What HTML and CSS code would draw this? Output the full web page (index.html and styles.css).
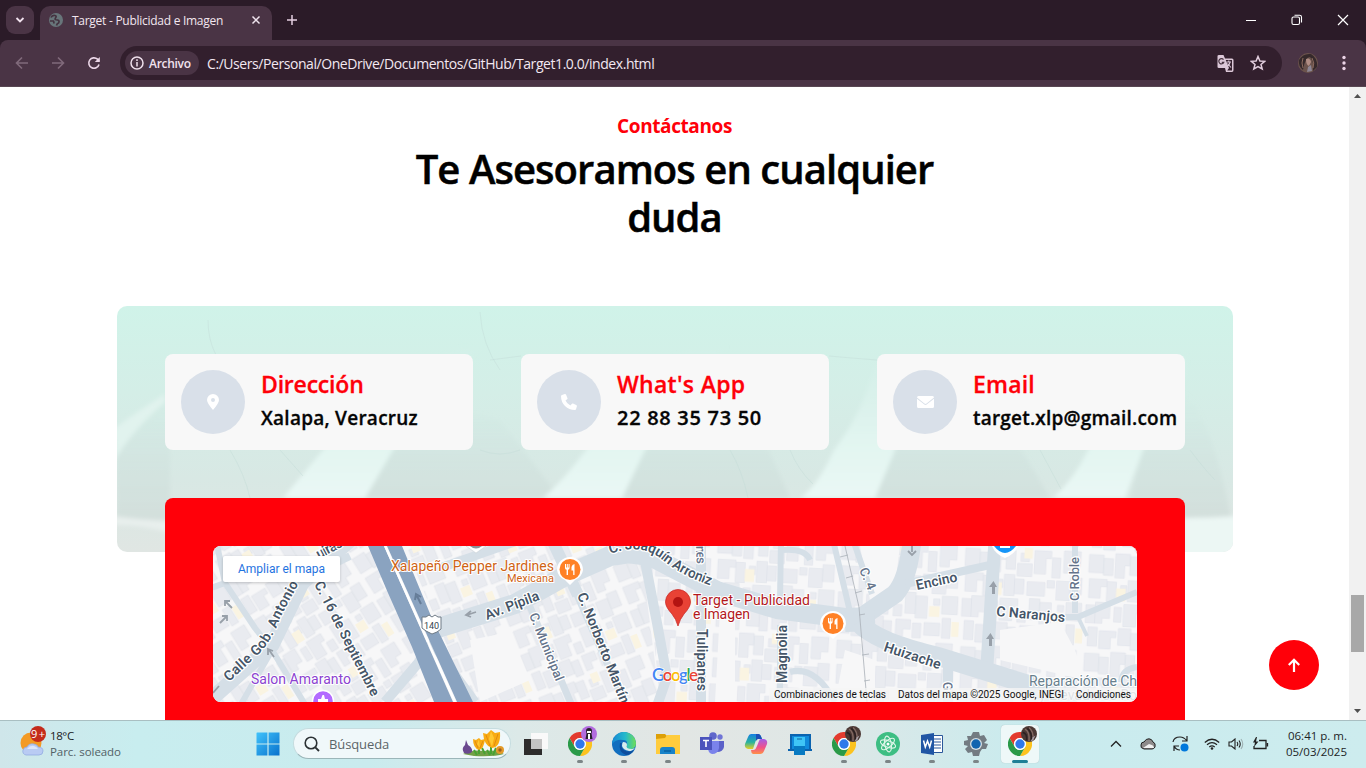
FILE: index.html
```html
<!DOCTYPE html>
<html lang="es">
<head>
<meta charset="utf-8">
<title>Target - Publicidad e Imagen</title>
<link rel="stylesheet" href="styles.css">
</head>
<body>
<svg class="defs" width="0" height="0">
  <defs>
    <symbol id="chrome" viewBox="0 0 24 24">
      <path fill="#e33b2e" d="M1.6 6A12 12 0 0 1 22.4 6H12A6 6 0 0 0 6.8 15Z"/>
      <path fill="#fcc31e" d="M22.4 6A12 12 0 0 1 12 24L17.2 15A6 6 0 0 0 12 6Z"/>
      <path fill="#2a9a48" d="M12 24A12 12 0 0 1 1.6 6L6.8 15A6 6 0 0 0 17.2 15Z"/>
      <circle cx="12" cy="12" r="6" fill="#fff"/><circle cx="12" cy="12" r="4.7" fill="#2f78ea"/>
    </symbol>
    <symbol id="portrait" viewBox="0 0 20 20">
      <circle cx="10" cy="10" r="10" fill="#6b534c"/>
      <path fill="#35292b" d="M1 7Q5 0 13 1Q20 5 19 14L15 18Q16 8 12 4Q7 4 5 17Q0 13 1 7Z"/>
      <path fill="#b08d84" d="M8 6Q12 4 13 9L11 13Q8 12 8 6Z"/>
      <path fill="#8d8795" d="M10 14L13 12L14 18L9 19Z"/>
      <path fill="none" stroke="#8c6b5e" d="M5 5Q3 10 5 15M14 5Q17 10 15 15"/>
    </symbol>
    <symbol id="hair" viewBox="0 0 20 20">
      <circle cx="10" cy="10" r="10" fill="#4b3834"/>
      <path fill="none" stroke="#806761" stroke-width="1.800" d="M5 4Q11 7 10 19M10 2Q16 7 15 17"/>
      <path fill="none" stroke="#2b2021" stroke-width="2" d="M2 8Q8 9 7 18M8 3Q14 8 13 18"/>
      <path fill="#a9a2a9" d="M15 14L18 12L15 18L12 19Z"/>
    </symbol>
    <symbol id="food" viewBox="0 0 26 28">
      <path fill="#fff" d="M13 0A13 13 0 0 1 26 13Q25 20 18 23L13 28L8 23Q1 20 0 13A13 13 0 0 1 13 0Z"/>
      <circle cx="13" cy="12.500" r="10.500" fill="#ff8126"/>
      <path fill="#fff" d="M8 7H9V10.500H9.800V7H10.800V10.500H11.600V7H12.600V11Q12.600 12.500 11 12.800V18H9.600V12.800Q8 12.500 8 11ZM17.500 7V18H16.200V13.500H14.500V10Q15 7.500 17.500 7Z"/>
    </symbol>
  </defs>
</svg>

<header class="tabstrip">
  <button class="tab-search"><svg width="12" height="12" viewBox="0 0 12 12"><path d="M2.500 4L6 7.500L9.500 4" fill="none" stroke="#f1e2ee" stroke-width="1.800"/></svg></button>
  <div class="tab">
    <svg width="14" height="14" viewBox="0 0 14 14"><circle cx="7" cy="7" r="7" fill="#68757a"/><path d="M2 4.500Q3 2 6 2.500Q8 3 6.500 5Q5 7 8.500 7Q11 7.500 9.500 10Q8 10.500 7.500 12.500M1 8H4.500Q5.500 9 4.500 10.500" fill="none" stroke="#443240" stroke-width="1.700"/></svg>
    <span class="tab-title">Target - Publicidad e Imagen</span>
    <svg width="10" height="10" viewBox="0 0 10 10"><path d="M1.500 1.500L8.500 8.500M8.500 1.500L1.500 8.500" stroke="#f0e4ee" stroke-width="1.500"/></svg>
  </div>
  <svg class="new-tab" width="12" height="12" viewBox="0 0 12 12"><path d="M6 1V11M1 6H11" stroke="#e5cfe1" stroke-width="1.500"/></svg>
  <div class="window-buttons">
    <svg width="12" height="12" viewBox="0 0 12 12"><path d="M1 6.500H11" stroke="#fff"/></svg>
    <svg width="12" height="12" viewBox="0 0 12 12"><g fill="none" stroke="#fff" stroke-width="1.100"><rect x="1" y="3" width="7.500" height="7.500" rx="1.500"/><path d="M3.500 1.200H8.500Q10.500 1.200 10.500 3V8.500"/></g></svg>
    <svg width="12" height="12" viewBox="0 0 12 12"><path d="M1 1L11 11M11 1L1 11" stroke="#fff" stroke-width="1.200"/></svg>
  </div>
</header>

<nav class="toolbar">
  <div class="nav-icons">
    <svg width="14" height="14" viewBox="0 0 14 14"><path d="M13 7H1.500M7 1.500L1.500 7L7 12.500" fill="none" stroke="#806a7b" stroke-width="1.600"/></svg>
    <svg width="14" height="14" viewBox="0 0 14 14"><path d="M1 7H12.500M7 1.500L12.500 7L7 12.500" fill="none" stroke="#806a7b" stroke-width="1.600"/></svg>
    <svg width="14" height="14" viewBox="0 0 14 14"><path d="M12 8.500A5.200 5.200 0 1 1 10.500 3.200L12 5" fill="none" stroke="#ecd7e8" stroke-width="1.600"/><path d="M12.800 1V6H7.800Z" fill="#ecd7e8"/></svg>
  </div>
  <div class="omnibox">
    <div class="chip">
      <svg width="14" height="14" viewBox="0 0 14 14"><circle cx="7" cy="7" r="6" fill="none" stroke="#efe0ec" stroke-width="1.500"/><path d="M7 6V10.500M7 3.300V5" stroke="#efe0ec" stroke-width="1.500"/></svg>
      <span>Archivo</span>
    </div>
    <span class="url">C:/Users/Personal/OneDrive/Documentos/GitHub/Target1.0.0/index.html</span>
    <svg class="translate" width="17" height="17" viewBox="0 0 17 17"><path d="M2 0H6.500L8 3.500H15Q16.500 3.500 16.500 5V15Q16.500 17 15 17H9L8 13H2Q.5 13 .5 12V1Q.5 0 2 0Z" fill="#dcc8d8"/><path d="M8.700 5H15V15.500H10.200L12 13Z" fill="#35212f"/><path d="M6.500 4.700A2.600 2.600 0 1 0 6.800 7.300H4.800" fill="none" stroke="#46323f" stroke-width="1.200"/><path d="M9.500 7H14M11.800 5.500V7M13 7.500Q12 10.500 10 11.500M10.500 8.500L14 12.500" fill="none" stroke="#dcc8d8" stroke-width="1.100"/></svg>
    <svg width="16" height="16" viewBox="0 0 16 16"><path d="M8 1.500L9.900 6L14.700 6.300L11 9.400L12.200 14L8 11.500L3.800 14L5 9.400L1.300 6.300L6.100 6Z" fill="none" stroke="#e2cede" stroke-width="1.500"/></svg>
  </div>
  <svg class="avatar" width="20" height="20"><use href="#portrait"/></svg>
  <svg class="kebab" width="4" height="16" viewBox="0 0 4 16"><g fill="#ecd4e7"><circle cx="2" cy="2.500" r="1.700"/><circle cx="2" cy="8" r="1.700"/><circle cx="2" cy="13.500" r="1.700"/></g></svg>
</nav>

<div class="viewport">
  <main class="page">
    <div class="heading">
      <h4>Contáctanos</h4>
      <h1>Te Asesoramos en cualquier duda</h1>
    </div>
    <section class="contact">
      <svg class="backdrop" width="1116" height="246" viewBox="117 306 1116 246">
        <defs>
          <linearGradient id="mint" x2="0" y2="1"><stop stop-color="#d0f3e9"/><stop offset=".35" stop-color="#d4eee7"/><stop offset=".7" stop-color="#d8e8e4"/><stop offset="1" stop-color="#e0e6e3"/></linearGradient>
          <linearGradient id="rib" gradientUnits="userSpaceOnUse" x1="0" y1="345" x2="0" y2="498"><stop stop-color="#daf3ed" stop-opacity="0"/><stop offset=".6" stop-color="#e1f5f0"/><stop offset="1" stop-color="#eaf8f5"/></linearGradient>
          <linearGradient id="shade" gradientUnits="userSpaceOnUse" x1="0" y1="390" x2="0" y2="510"><stop stop-color="#c6dfda" stop-opacity="0"/><stop offset="1" stop-color="#cbd9d6" stop-opacity=".5"/></linearGradient>
          <filter id="soft"><feGaussianBlur stdDeviation="2.200"/></filter>
        </defs>
        <rect x="117" y="306" width="1116" height="246" fill="url(#mint)"/>
        <g filter="url(#soft)">
          <path fill="url(#shade)" d="M117 456Q130 432 170 398V530Q140 521 117 517ZM393 450Q440 400 500 420L560 498H365ZM645 450Q690 400 760 430L790 498H622ZM895 450Q940 400 1010 430L1050 498H875ZM1143 450L1185 390Q1215 430 1231 518H1125Z"/>
          <path fill="url(#rib)" d="M393 450Q425 400 478 350L465 345Q370 390 323 450L283 498H365ZM645 450Q672 400 735 340L690 345Q620 400 586 450Q564 480 543 498H622ZM895 450Q880 400 876 360Q865 410 834 450Q820 482 801 498H875ZM1143 450Q1170 400 1186 375V354Q1120 400 1088 450Q1075 478 1053 498H1125Z"/>
          <path fill="#e1f3ee" d="M112 430Q118 450 112 465Q130 432 165 402V394Q140 410 112 430Z"/>
          <path fill="#e8efed" d="M112 516Q140 520 170 521V533Q140 524 112 525Z"/>
          <path fill="#ecf7f4" d="M1183 518Q1210 518 1238 516V556H1183Z"/>
        </g>
        <path fill="none" stroke="#c4dcd6" stroke-opacity=".45" d="M208 320Q208 340 216 355M480 312Q482 345 500 370M490 360L521 356M829 356Q850 358 877 360M230 450Q245 475 250 498M280 450L303 476M480 450Q500 458 520 450M730 450Q742 470 748 498M790 450Q798 470 813 484M1040 450L1061 489M1190 450Q1205 470 1215 480"/>
      </svg>
      <div class="cards">
        <article class="card">
          <div class="badge"><svg width="12" height="16" viewBox="0 0 12 16"><path fill="#fff" fill-rule="evenodd" d="M6 0A6 6 0 0 1 12 6Q12 9 6 16Q0 9 0 6A6 6 0 0 1 6 0ZM6 4A2 2 0 1 0 6 8A2 2 0 1 0 6 4Z"/></svg></div>
          <div><h3 class="k1">Dirección</h3><p class="v1">Xalapa, Veracruz</p></div>
        </article>
        <article class="card">
          <div class="badge"><svg width="16" height="16" viewBox="0 0 16 16"><path fill="#fff" d="M5.100.8Q4.700-.1 3.800.1L1 .9Q0 1.200 0 2Q0 8 4 12Q8 16 14 16Q14.800 16 15.100 15L15.900 12.200Q16.100 11.300 15.200 10.900L12 9.600Q11.200 9.200 10.700 9.900L9.400 11.500Q6 10 4.500 6.600L6.100 5.300Q6.800 4.800 6.400 4Z"/></svg></div>
          <div><h3 class="k2">What's App</h3><p class="v2">22 88 35 73 50</p></div>
        </article>
        <article class="card">
          <div class="badge"><svg width="17" height="12" viewBox="0 0 17 12"><path fill="#fff" d="M1.500 0H15.500Q17 0 17 1.500L9.500 7.500Q8.500 8.300 7.500 7.500L0 1.500Q0 0 1.500 0ZM0 2.800L7 8.300Q8.500 9.500 10 8.300L17 2.800V10.500Q17 12 15.500 12H1.500Q0 12 0 10.500Z"/></svg></div>
          <div><h3 class="k3">Email</h3><p class="v3">target.xlp@gmail.com</p></div>
        </article>
      </div>
      <div class="map-frame">
        <svg class="map" width="924" height="156" viewBox="213 546 924 156">
          <defs>
            <pattern id="lots" width="118" height="94" patternUnits="userSpaceOnUse">
              <g fill="#e9ebf0" stroke="#dfe2ea" stroke-width=".6"><path d="M2 3H16V20H2ZM16 6H25V22H16ZM27 1H41V12H36V24H27ZM41 3H50V21H41ZM55 5H63V13H55ZM52 15H66V27H52ZM68 2H84V9H79V24H68ZM85 8H93V27H85ZM96 1H112V15H105V22H96ZM3 26H20V33H14V44H3ZM20 28H29V47H20ZM33 31H39V39H33ZM40 26H50V46H40ZM50 30H59V44H50ZM62 32H79V45H62ZM81 30H88V37H81ZM90 30H103V48H90ZM103 26H114V42H103ZM1 51H10V68H1ZM10 48H24V63H17V68H10ZM28 52H35V66H28ZM37 49H54V57H49V70H37ZM54 60H62V71H54ZM65 48H75V68H65ZM75 51H86V72H75ZM92 53H98V59H92ZM100 50H115V67H100ZM4 72H13V90H4ZM15 75H31V81H26V92H15ZM33 72H45V88H33ZM45 76H53V92H45ZM57 74H71V83H64V90H57ZM73 77H81V91H73ZM84 76H99V88H84ZM101 71H109V90H101Z"/></g>
              <path fill="#faf4e2" d="M58 0H66V10H58ZM29 34H38V46H29ZM88 60H98V70H88ZM110 74H117V88H110Z"/>
            </pattern>
            <pattern id="lotsLeft" href="#lots" patternTransform="rotate(-32)"/>
            <pattern id="lotsMid" href="#lots" patternTransform="rotate(-22)"/>
            <pattern id="lotsRight" href="#lots" patternTransform="rotate(3) scale(1.050)"/>
          </defs>
          <rect x="213" y="546" width="924" height="156" fill="#f7f7f8"/>
          <path fill="url(#lotsLeft)" d="M213 546H375L435 702H213Z"/>
          <path fill="url(#lotsMid)" d="M405 546H640L660 702H470Z"/>
          <path fill="url(#lotsRight)" d="M645 546H1137V702H660Z"/>
          <path fill="#f7f7f8" d="M470 640L510 632L530 680L480 702ZM860 546H900L895 585L870 600ZM1000 630L1060 622L1075 650L1085 680L1000 660ZM720 610H735V702H715ZM845 650L875 660V702H835Z"/>
          <g fill="none" stroke="#d5dfe7" stroke-linejoin="round">
            <path stroke-width="15" d="M208 702L272 645L302 583L350 540"/>
            <path stroke-width="6" d="M216 540L225 583L255 628L272 650L306 706M225 583L205 590M272 650L240 706"/>
            <path stroke-width="10" d="M385 702L425 655"/><path stroke-width="8" d="M300 580L350 556"/>
            <path stroke-width="20" d="M438 628L515 604L567 575L610 556L650 550"/>
            <path stroke-width="9" d="M430 640L475 702M440 568L520 540"/>
            <path stroke-width="12" d="M553 542L578 595"/><path stroke-width="7" d="M575 590L626 706M525 595L572 706"/>
            <path stroke-width="20" d="M620 552L650 556L717 591L777 609L860 620"/>
            <path stroke-width="10" d="M644 556L657 623L667 677L657 706"/>
            <path stroke-width="10" d="M701 540V706"/><path stroke-width="6" d="M781 540L780 600M780 625V706M782 550Q805 548 810 560M790 672Q815 665 835 702"/>
            <path stroke-width="19" d="M860 618L895 594Q908 580 912 540"/>
            <path stroke-width="24" d="M845 620L875 619"/>
            <path stroke-width="8" d="M905 584L990 565"/>
            <path stroke-width="13" d="M995 540L987 665"/>
            <path stroke-width="19" d="M858 622Q875 642 940 657L1027 684L1075 706"/>
            <path stroke-width="6" d="M833 540L851 616M853 540L872 594M1075 540V613M1065 617H1078L1137 592M1121 682Q1122 669 1137 667"/>
            <path stroke-width="4" d="M1077 615L1087 636"/><path stroke-width="10" d="M948 660V706"/>
          </g>
          <path d="M845 546L859 607L867 702M840 557L848 555M846 578L853 576M855 593L862 591M859 615L865 614M862 655L869 654M864 681L870 680" fill="none" stroke="#aab0b7" stroke-width=".8"/>
          <path fill="#8aa3c0" d="M368 546H384L453 702H434L412 647L388 593L368 546ZM387 546H402L431 616L473 702H457Z"/>
          <path stroke="#fff" stroke-width="2" d="M385 546L455 702"/>
          <path fill="none" stroke="#98a0a9" stroke-width="1.800" d="M232 608L226 602M225 606V601H230M220 623L227 616M222 616H227V621M274 657L269 650M268 655V649L273 651M213 693L219 686M476 612L467 615M471 611L466 615L471 617M912 546V552M908 551L912 555L916 551"/>
          <path fill="none" stroke="#667d98" stroke-width="2" d="M421 604L417 596M415 600L416 594L421 597"/>
          <path fill="#98a0a9" d="M992 594V587H989L993.500 581L997 587H995V594ZM989 646V639H986L990.500 633L994 639H992V646Z"/>
          <g class="street">
            <path id="gob" class="guide" d="M229 682L262 651Q275 634 280 618L300 581"/><text textLength="122"><textPath href="#gob">Calle Gob. Antonio</textPath></text>
            <text transform="translate(319 559) rotate(-28)" textLength="28">uiras</text>
            <text transform="translate(314 584) rotate(63)" textLength="127">C. 16 de Septiembre</text>
            <text transform="translate(487 620) rotate(-21)" textLength="57">Av. Pípila</text>
            <text class="minor" transform="translate(529 615) rotate(68)" textLength="72">C. Municipal</text>
            <text transform="translate(577 595) rotate(68)" textLength="118">C. Norberto Martín</text>
            <path id="joa" class="guide" d="M610 554Q640 543 660 558Q682 577 716 587"/><text textLength="110"><textPath href="#joa">C. Joaquín Arroniz</textPath></text>
            <text class="minor" transform="translate(696 546) rotate(88)" textLength="18">nes</text>
            <text transform="translate(697 629) rotate(90)" textLength="62">Tulipanes</text>
            <text transform="translate(787 683) rotate(-90)" textLength="58">Magnolia</text>
            <text class="minor" transform="translate(859 570) rotate(66)" textLength="23">C. 4</text>
            <text transform="translate(917 590) rotate(-12)" textLength="42">Encino</text>
            <text transform="translate(996 616) rotate(5)" textLength="69">C Naranjos</text>
            <text class="minor" transform="translate(1079 601) rotate(-90)" textLength="44">C Roble</text>
            <text transform="translate(883 651) rotate(18)" textLength="59">Huizache</text>
            <text class="minor" transform="translate(943 682) rotate(88)">G</text>
          </g>
          <path fill="#fff" stroke="#6f7b86" d="M422 617L426 617L429 615L432 617L435 615L438 617H441V629L437 632L432 634L426 631L422 628Z"/>
          <text x="424" y="628.500" font-size="9" fill="#34434e" textLength="15">140</text>
          <g class="place">
            <text x="391" y="571" fill="#cf6315" textLength="163">Xalapeño Pepper Jardines</text>
            <text class="small" x="507" y="582" fill="#cf6315" textLength="47">Mexicana</text>
            <text x="251" y="684" fill="#8b42d1" textLength="100">Salon Amaranto</text>
            <text x="693" y="605" fill="#b3171c" textLength="117">Target - Publicidad</text>
            <text x="693" y="619" fill="#b3171c" textLength="57">e Imagen</text>
            <text x="1029" y="686" fill="#68808e" textLength="108">Reparación de Ch</text>
            <text x="1039" y="700" fill="#9aa8b1" textLength="98">y Elevadores Ro</text>
          </g>
          <use href="#food" x="557" y="557" width="26" height="28"/><use href="#food" x="820" y="611" width="26" height="28"/>
          <circle cx="323" cy="701" r="10.500" fill="#b36bff" stroke="#fff" stroke-width="1.500"/><path fill="#fff" d="M318 699H321L322.500 695H324L325 699H328V702H318Z"/>
          <path fill="#fff" stroke="#c5cad0" stroke-width=".5" d="M466 546L476 553L486 546Z"/><path fill="#8a9299" d="M470 546Q476 551 482 546Z"/>
          <path fill="#fff" d="M992 546Q995 554 1005 558Q1015 554 1018 546Z"/><path fill="#1595f8" d="M994 546Q1005 560 1016 546Z"/><path fill="#fff" d="M1000 546H1010V548H1000Z"/>
          <path fill="#e94235" stroke="#c5221f" stroke-width=".7" d="M678 589.500A12.500 12.500 0 0 1 690.500 602Q690.500 607 684 614Q680 619 678 626Q676 619 672 614Q665.500 607 665.500 602A12.500 12.500 0 0 1 678 589.500Z"/><circle cx="678" cy="602" r="5" fill="#b31412"/>
          <text class="google" x="652" y="681" textLength="46"><tspan fill="#4285f4">G</tspan><tspan fill="#ea4335">o</tspan><tspan fill="#fbbc04">o</tspan><tspan fill="#4285f4">g</tspan><tspan fill="#34a853">l</tspan><tspan fill="#ea4335">e</tspan></text>
          <rect x="769" y="688" width="368" height="14" fill="#f5f5f5" fill-opacity=".75"/>
          <g class="legal"><text x="774" y="698" textLength="112">Combinaciones de teclas</text><text x="898" y="698" textLength="166">Datos del mapa ©2025 Google, INEGI</text><text x="1076" y="698" textLength="55">Condiciones</text></g>
        </svg>
        <a class="map-link">Ampliar el mapa</a>
      </div>
    </section>
    <a class="to-top"><svg width="14" height="15" viewBox="0 0 14 15"><path d="M7 14V2M1.800 7L7 1.800L12.200 7" fill="none" stroke="#fff" stroke-width="2.200"/></svg></a>
  </main>
  <aside class="scrollbar">
    <svg width="17" height="17" viewBox="0 0 17 17"><path d="M5 11L8.500 7L12 11Z" fill="#505050"/></svg>
    <div class="thumb"></div>
    <svg width="17" height="17" viewBox="0 0 17 17"><path d="M5 6L8.500 10L12 6Z" fill="#505050"/></svg>
  </aside>
</div>

<footer class="taskbar">
  <div class="weather">
    <svg width="30" height="32" viewBox="0 0 30 32"><circle cx="11" cy="17" r="10.500" fill="#f39a25"/><path fill="#b9cbf3" stroke="#93ace2" stroke-width=".8" d="M6 29Q2 28 3 24Q4 21 7 21Q9 17 14 18Q18 19 18 21Q23 21 23 25Q23 29 19 29Z"/><path fill="#dce6fb" d="M7 23Q10 19 14 20Q17 21 18 23Z"/><circle cx="18" cy="8" r="8" fill="#c42b1c"/><text x="11" y="12" class="count" textLength="14">9+</text></svg>
    <div><b>18°C</b><span>Parc. soleado</span></div>
  </div>
  <svg class="start" width="24" height="24" viewBox="0 0 24 24"><defs><linearGradient id="win" x2="1" y2="1"><stop stop-color="#41c3fb"/><stop offset="1" stop-color="#0871cd"/></linearGradient></defs><path fill="url(#win)" d="M1 .5H11.400V11.400H.5V1ZM12.600.5H23.500V11.400H12.600ZM.5 12.600H11.400V23.500H.5ZM12.600 12.600H23.500V23.500H12.600Z"/></svg>
  <div class="search">
    <svg width="16" height="16" viewBox="0 0 16 16"><circle cx="7" cy="7" r="5.800" fill="none" stroke="#2b3134" stroke-width="1.600"/><path d="M11.300 11.300L15 15" stroke="#2b3134" stroke-width="1.900"/></svg>
    <span>Búsqueda</span>
    <svg class="flowers" width="43" height="27" viewBox="0 0 43 27"><path fill="#72a047" d="M1 24Q11 19 22 21Q34 19 42 24Q32 27 12 26Z"/><path fill="none" stroke="#47a234" stroke-width="2" d="M17 18V24M29 16V24M25 20L28 25M34 18L31 25M20 18L23 24M12 20L15 25"/><path fill="#6a498f" d="M4 10L6 15Q11 18 10 22Q7 25 2 23Q-1 18 3 15Z"/><path fill="#f8ab13" d="M11 9L14 10L17 8L19 10L23 9Q22 19 17 20Q11 18 11 9ZM21 3L25 4L29 0L33 3L38 2Q39 17 30 18Q22 16 21 3Z"/><path fill="#ffc832" d="M17 9L18 18L15 14ZM29 1L32 8L30 17L27 9Z"/><path fill="none" stroke="#db8410" stroke-width=".8" d="M24 5L28 16M36 4L32 16M13 11L16 18M21 11L18 18"/><circle cx="38" cy="20" r="4" fill="#e49a28"/><circle cx="38" cy="20" r="1.700" fill="#9e5f20"/></svg>
  </div>
  <div class="apps">
    <div class="app"><svg width="24" height="24" viewBox="0 0 24 24"><path fill="#f9f9f9" d="M7 1H24V17H7Z"/><path fill="#2d2c2c" d="M0 7H18V23H0Z"/><path fill="#c3c3c3" d="M7 7H18V17H7Z"/></svg></div>
    <div class="app running"><svg width="24" height="24"><use href="#chrome"/></svg><svg class="profile" width="16" height="16" viewBox="0 0 16 16"><circle cx="8" cy="8" r="8" fill="#b26cdf"/><path fill="#28222a" d="M5 5Q5 2 8 2Q11 2 11 5L10.500 7.500L11.500 13H4.500L5.500 7.500Z"/><path fill="#fff" d="M6 5H10V7H6ZM7 8H9V13H7Z"/></svg></div>
    <div class="app running"><svg width="24" height="24" viewBox="0 0 24 24"><defs><linearGradient id="edge" x2="1"><stop stop-color="#1689d4"/><stop offset=".55" stop-color="#24b9cc"/><stop offset="1" stop-color="#70df55"/></linearGradient></defs><circle cx="12" cy="12" r="12" fill="#126ebf"/><path fill="url(#edge)" d="M.2 10A12 12 0 0 1 24 11Q24 18 16 17Q13 16 15 13Q16 8 11 8Q4 7 .2 12Z"/><path fill="#d6ecee" d="M11 10Q15 10 15 13Q13 17 20 17L23 16Q20 20 17 19Q11 18 10 14Q10 11 11 10Z"/><path fill="#0d4d9d" d="M8 11Q6 20 14 23Q19 23 22 18Q16 21 12 18Q8 15 10 11Z"/></svg></div>
    <div class="app running"><svg width="24" height="24" viewBox="0 0 24 24"><path fill="#dda008" d="M0 2H9L11 4V8H0Z"/><path fill="#ffcc3d" d="M0 7L9 6L11 3H24V22H0Z"/><path fill="#1883c9" d="M4 22V18Q4 15 7 15H16Q19 15 19 18V22Z"/><path stroke="#0960a1" stroke-width="1.500" d="M8 19H15"/></svg></div>
    <div class="app"><svg width="24" height="24" viewBox="0 0 24 24"><circle cx="13" cy="4" r="3.800" fill="#6067cb"/><circle cx="20" cy="5" r="2.700" fill="#7075d6"/><path fill="#5c62c9" d="M16 9H24V15Q23 20 17 20Z"/><path fill="#7b83eb" d="M8 9H19V16Q18 22 12 22Q8 21 8 16Z"/><path fill="#4b53bc" d="M0 5H12V18H0Z"/><path stroke="#fff" stroke-width="1.600" d="M3 8.500H9M6 8.500V15"/></svg></div>
    <div class="app"><svg width="24" height="24" viewBox="0 0 24 24"><defs><linearGradient id="cop1" x2="0" y2="1"><stop stop-color="#167fe4"/><stop offset=".55" stop-color="#29b29d"/><stop offset="1" stop-color="#e6cf25"/></linearGradient><linearGradient id="cop2" x2="0" y2="1"><stop stop-color="#a35ee9"/><stop offset=".55" stop-color="#ef518b"/><stop offset="1" stop-color="#ff9147"/></linearGradient></defs><path fill="url(#cop1)" d="M7 2H15Q17 3 18 7H14Q12 7 11 11L9 17H4Q0 16 1 12L4 5Q5 2 7 2Z"/><path fill="#1c50b8" d="M12 2H15Q17 3 18 7H14Q13 7 12 9Z"/><path fill="url(#cop2)" d="M17 7H20Q24 8 23 12L20 19Q19 22 16 22H9Q7 21 7 18H10Q12 17 13 14L15 9Q15.500 7 17 7Z"/></svg></div>
    <div class="app"><svg width="24" height="24" viewBox="0 0 24 24"><path fill="#0b63af" d="M2 2H23V17H24V19H0V17H2Z"/><path fill="#108adb" d="M4 4H21V17H4Z"/><path fill="#3fc5f6" d="M6 5H17V23H6Z"/><path fill="#087ac2" d="M6 14H17V23H6Z"/><path stroke="#10639c" d="M9 7H14"/></svg></div>
    <div class="app running"><svg width="24" height="24"><use href="#chrome"/></svg><svg class="profile" width="16" height="16"><use href="#hair"/></svg></div>
    <div class="app running"><svg width="24" height="24" viewBox="0 0 24 24"><circle cx="12" cy="12" r="12" fill="#3dbe83"/><g fill="none" stroke="#def5e8" stroke-width="1.100"><ellipse cx="12" cy="12" rx="8" ry="3.300" transform="rotate(20 12 12)"/><ellipse cx="12" cy="12" rx="8" ry="3.300" transform="rotate(80 12 12)"/><ellipse cx="12" cy="12" rx="8" ry="3.300" transform="rotate(140 12 12)"/></g><circle cx="12" cy="12" r="1.500" fill="#fff"/></svg></div>
    <div class="app running"><svg width="24" height="24" viewBox="0 0 24 24"><path fill="#fff" stroke="#2b579a" d="M12 3.500H22.500V20.500H12Z"/><path stroke="#2b579a" d="M14 7H21M14 10H21M14 13H21M14 16H21"/><path fill="#2055a4" d="M1 3L14 1V23L1 21Z"/><path fill="none" stroke="#fff" stroke-width="1.500" d="M3.500 8.500L5.300 15L7.500 9L9.700 15L11.500 8.500"/></svg></div>
    <div class="app running"><svg width="24" height="24" viewBox="0 0 24 24"><path fill="#737b82" d="M9 0H15L16 4L20 3L23 8L20 11L24 12L22 17L18 17L16 20L15 24H9L8 20L4 21L1 17L4 14L0 13V9L4 8L3 4L7 4Z"/><circle cx="12" cy="12" r="6" fill="#d6e0e5"/><circle cx="12" cy="12" r="4.700" fill="#1264af"/></svg></div>
    <div class="app running active"><svg width="24" height="24"><use href="#chrome"/></svg><svg class="profile" width="16" height="16"><use href="#hair"/></svg></div>
  </div>
  <div class="tray">
    <svg width="12" height="8" viewBox="0 0 12 8"><path d="M1 6.500L6 1.500L11 6.500" fill="none" stroke="#222" stroke-width="1.300"/></svg>
    <svg class="cloud" width="16" height="12" viewBox="0 0 16 12"><path fill="#8e8b8b" stroke="#222" d="M4 11Q0 10 1 7Q1 4 4 4Q6 .5 9 .8Q12 1 13 4Q16 5 15 9Q14 11 12 11Z"/><path fill="#f2f2f2" d="M3 10L9 6Q14 7 14 10Z"/></svg>
    <svg class="sync" width="17" height="17" viewBox="0 0 17 17"><path d="M1 7Q2 2 8 2Q12 2 15 6M15 1V6H10M2 16V11H7M2 11Q4 15 8 15" fill="none" stroke="#222" stroke-width="1.200"/><circle cx="12.500" cy="12.500" r="4" fill="#0078dc"/></svg>
    <svg class="wifi" width="16" height="12" viewBox="0 0 16 12"><g fill="none" stroke="#222" stroke-width="1.200"><path d="M.8 4.500Q8-2 15.200 4.500M3 6.800Q8 2.400 13 6.800M5.300 9Q8 6.800 10.700 9"/></g><circle cx="8" cy="10.500" r="1.300" fill="#222"/></svg>
    <svg class="sound" width="16" height="12" viewBox="0 0 16 12"><g fill="none" stroke="#222" stroke-width="1.100"><path d="M1 4H3.500L7 1V11L3.500 8H1ZM9 4Q10.500 6 9 8M11 2.500Q13.500 6 11 9.500"/><path stroke="#9eb1b3" d="M13 1Q16.500 6 13 11"/></g></svg>
    <svg class="battery" width="17" height="14" viewBox="0 0 17 14"><path d="M7 3.500H14V11.500H2V9M15.500 6V9.500" fill="none" stroke="#222" stroke-width="1.300"/><path fill="#222" d="M4 0L1 5.500H3L2 10L6.500 4.500H4L5 0Z"/></svg>
    <div class="clock"><span>06:41 p. m.</span><span>05/03/2025</span></div>
  </div>
</footer>
</body>
</html>
```
FILE: styles.css
```css
* { box-sizing: border-box; }
body { margin: 0; width: 1366px; height: 768px; overflow: hidden; display: flex; flex-direction: column; font-family: "Open Sans", "Noto Sans", sans-serif; background: #2b1b28; }
.defs { position: absolute; }
svg { display: block; flex: none; }
h1, h3, h4, p { margin: 0; white-space: nowrap; }

.tabstrip { height: 40px; flex: none; display: flex; align-items: center; padding-left: 6px; background: #2b1b28; color: #f2e6ef; }
.tab-search { width: 28px; height: 28px; padding: 0; border: 0; border-radius: 9px; background: #4a3445; display: flex; align-items: center; justify-content: center; }
.tab { margin-left: 6px; align-self: flex-end; width: 232px; height: 34px; border-radius: 10px 10px 0 0; background: #4a3445; display: flex; align-items: center; padding: 0 11px 6px 9px; }
.tab-title { margin-left: 9px; flex: 1; font-size: 12px; letter-spacing: -.27px; white-space: nowrap; }
.new-tab { margin-left: 14px; }
.window-buttons { margin-left: auto; display: flex; gap: 34px; padding-right: 17px; }

.toolbar { height: 47px; flex: none; display: flex; align-items: center; background: #4a3445; border-radius: 8px 8px 0 0; border-bottom: 1px solid #584752; }
.nav-icons { display: flex; gap: 22px; width: 120px; padding-left: 15px; }
.omnibox { width: 1162px; height: 34px; border-radius: 17px; background: #321f2d; display: flex; align-items: center; padding: 0 16px 0 5px; }
.chip { width: 74px; height: 24px; border-radius: 12px; background: #4a3445; display: flex; align-items: center; gap: 5px; padding-left: 5px; font-size: 12px; font-weight: 600; color: #f2e3ef; letter-spacing: -.3px; }
.url { margin-left: 8px; flex: 1; font-size: 14px; letter-spacing: -.435px; color: #f3e8f1; white-space: nowrap; }
.translate { margin-right: 16px; }
.avatar { margin-left: 16px; }
.kebab { margin-left: 24px; }

.viewport { height: 633px; flex: none; display: flex; background: #fff; overflow: hidden; }
.page { position: relative; width: 1349px; height: 633px; overflow: hidden; display: flex; flex-direction: column; align-items: center; }
.heading { height: 219px; flex: none; width: 560px; padding-top: 27px; text-align: center; font-weight: 600; }
.heading h4 { font-size: 19px; line-height: 24px; color: #ff0009; font-weight: 700; letter-spacing: -.4px; }
.heading h1 { margin: 7px auto 0; font-size: 40px; line-height: 48px; color: #000; font-weight: 600; letter-spacing: -.94px; -webkit-text-stroke: .5px #000; white-space: normal; }
.contact { position: relative; width: 1116px; height: 246px; flex: none; margin-left: 1px; padding: 48px; }
.backdrop { position: absolute; inset: 0; border-radius: 10px; }
.cards { position: relative; display: flex; gap: 48px; }
.card { width: 308px; height: 96px; border-radius: 8px; background: #f8f8f8; display: flex; align-items: center; padding: 16px; gap: 16px; }
.card > div:last-child { padding-bottom: 5px; }
.badge { flex: none; width: 64px; height: 64px; border-radius: 50%; background: #d9e0e9; display: flex; align-items: center; justify-content: center; }
.card h3 { font-size: 23px; line-height: 29px; font-weight: 600; color: #ff0009; -webkit-text-stroke: .3px #ff0009; }
.card p { margin-top: 7px; font-size: 19px; line-height: 24px; font-weight: 600; color: #050505; -webkit-text-stroke: .3px #050505; }
.card .k1 { letter-spacing: -.2px; }
.card .k2 { letter-spacing: .3px; }
.card .k3 { letter-spacing: .2px; }
.card .v1 { letter-spacing: .25px; }
.card .v2 { font-size: 20px; letter-spacing: .7px; }
.card .v3 { letter-spacing: .2px; }
.map-frame { position: relative; margin-top: 48px; width: 1020px; height: 300px; padding: 48px; border-radius: 8px; background: #ff0009; }
.map { border-radius: 8px; font-family: Roboto, sans-serif; }
.guide { fill: none; stroke: none; }
.street { font-size: 14px; font-weight: 600; fill: #465668; stroke: #fff; stroke-width: 2.5px; paint-order: stroke; stroke-linejoin: round; }
.minor { font-size: 13px; font-weight: 500; fill: #64738a; }
.place { font-size: 14px; stroke: #fff; stroke-width: 2px; paint-order: stroke; stroke-linejoin: round; }
.small { font-size: 11px; }
.google { font-family: Lato, sans-serif; font-weight: 600; font-size: 17px; stroke: #fff; stroke-width: 1.5px; paint-order: stroke; }
.legal { font-size: 10px; fill: #111; }
.map-link { position: absolute; left: 58px; top: 58px; width: 117px; height: 26px; border-radius: 2px; background: #fff; box-shadow: 0 1px 3px #0003; font: 12px/26px Roboto, sans-serif; color: #1f73df; text-align: center; }
.to-top { position: absolute; left: 1269px; top: 553px; width: 50px; height: 50px; border-radius: 50%; background: #ff0009; display: flex; align-items: center; justify-content: center; }
.scrollbar { width: 17px; background: #f1f1f1; display: flex; flex-direction: column; }
.thumb { width: 13px; height: 57px; margin: 491px auto auto; background: #a8a8a8; }

.taskbar { height: 48px; flex: none; display: flex; align-items: center; border-top: 1px solid #a9bfc2; padding-bottom: 2px; background: linear-gradient(90deg, #cfe6ea 0, #c8edef 10%, #c9ebee 27%, #dce9e8 38%, #e2e6e4 50%, #dfe7e6 60%, #c9ebee 75%, #cdecee 100%); }
.weather { width: 235px; margin-left: 20px; display: flex; height: 36px; }
.weather div { display: flex; flex-direction: column; font-size: 11.500px; line-height: 16px; color: #526166; padding-top: 2px; }
.weather b { font-weight: 400; color: #1a2021; letter-spacing: -.4px; }
.weather span { letter-spacing: -.05px; }
.count { font-size: 11px; fill: #fff; }
.start { margin-left: 1px; }
.search { width: 218px; height: 31px; margin-left: 13px; border: 1px solid #c5dcdf; border-bottom-color: #9bb6b9; border-radius: 16px; background: #f0f8fa; display: flex; align-items: center; padding: 0 5px 0 10px; font-size: 13px; color: #5b6568; }
.search span { margin-left: 9px; flex: 1; letter-spacing: -.1px; }
.apps { display: flex; margin-left: 3px; }
.app { position: relative; width: 44px; height: 45px; display: flex; align-items: center; justify-content: center; }
.app .profile { position: absolute; left: 23px; top: 5px; }
.app.running::after { content: ""; position: absolute; left: 19px; bottom: 3px; width: 6px; height: 3px; border-radius: 2px; background: #7c8587; }
.app.active::before { content: ""; position: absolute; left: 3px; top: 4px; width: 38px; height: 38px; border-radius: 4px; background: #eef8f8; box-shadow: 0 0 1px #9fb5b8; }
.app.active svg { z-index: 1; }
.app.active::after { left: 14px; width: 16px; background: #1d7f96; }
.tray { margin-left: auto; display: flex; align-items: center; padding-right: 19px; }
.cloud { margin-left: 18px; }
.sync { margin-left: 16px; }
.wifi { margin-left: 15px; }
.sound { margin-left: 8px; }
.battery { margin-left: 8px; }
.clock { width: 78px; display: flex; flex-direction: column; text-align: right; font-size: 11.500px; line-height: 16px; color: #1c2426; }
.clock span { white-space: nowrap; }
```
